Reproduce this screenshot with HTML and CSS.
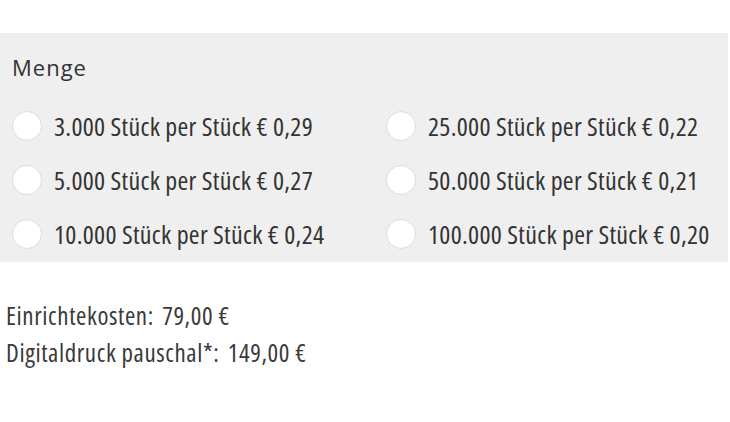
FILE: index.html
```html
<!DOCTYPE html>
<html lang="de">
<head>
<meta charset="utf-8">
<link rel="stylesheet" href="styles.css">
</head>
<body>
<div class="page">
  <section class="qty">
    <h2 class="qty-title">Menge</h2>
    <div class="qty-grid">
      <label class="opt"><span class="radio"></span><span class="opt-text">3.000 Stück per Stück € 0,29</span></label>
      <label class="opt"><span class="radio"></span><span class="opt-text">25.000 Stück per Stück € 0,22</span></label>
      <label class="opt"><span class="radio"></span><span class="opt-text">5.000 Stück per Stück € 0,27</span></label>
      <label class="opt"><span class="radio"></span><span class="opt-text">50.000 Stück per Stück € 0,21</span></label>
      <label class="opt"><span class="radio"></span><span class="opt-text">10.000 Stück per Stück € 0,24</span></label>
      <label class="opt"><span class="radio"></span><span class="opt-text">100.000 Stück per Stück € 0,20</span></label>
    </div>
  </section>
  <div class="costs">
    <div class="cost-line"><span class="cost-label">Einrichtekosten:</span> <span class="cost-value">79,00 €</span></div>
    <div class="cost-line"><span class="cost-label">Digitaldruck pauschal*:</span> <span class="cost-value">149,00 €</span></div>
  </div>
</div>
</body>
</html>
```
FILE: styles.css
```css
html, body {
  margin: 0;
  padding: 0;
  background: #ffffff;
}
.page {
  padding-top: 33px;
  font-family: "Open Sans", "Noto Sans", sans-serif;
  color: #333333;
}
.qty {
  width: 728px;
  background: #efefef;
  padding: 20px 0 1px 12px;
  box-sizing: border-box;
}
.qty-title {
  margin: 0 0 18px 0;
  font-size: 22px;
  line-height: 28px;
  font-weight: 400;
  letter-spacing: 1px;
  color: #333333;
}
.qty-grid {
  display: grid;
  grid-template-columns: 374px 1fr;
  grid-auto-rows: 54px;
}
.opt {
  display: flex;
  align-items: center;
  gap: 12px;
}
.radio {
  width: 28px;
  height: 28px;
  border: 1px solid #dcdcdc;
  border-radius: 50%;
  background: #ffffff;
  flex: none;
}
.opt-text {
  font-size: 26px;
  line-height: 54px;
  font-stretch: condensed;
  letter-spacing: 0.3px;
  white-space: nowrap;
  color: #333333;
}
.costs {
  margin-top: 35px;
  padding-left: 6px;
}
.cost-line {
  font-size: 25px;
  line-height: 37px;
  font-stretch: condensed;
  letter-spacing: 0.6px;
  color: #3a3a3a;
  white-space: nowrap;
}
.cost-value {
  margin-left: 3px;
}
```
